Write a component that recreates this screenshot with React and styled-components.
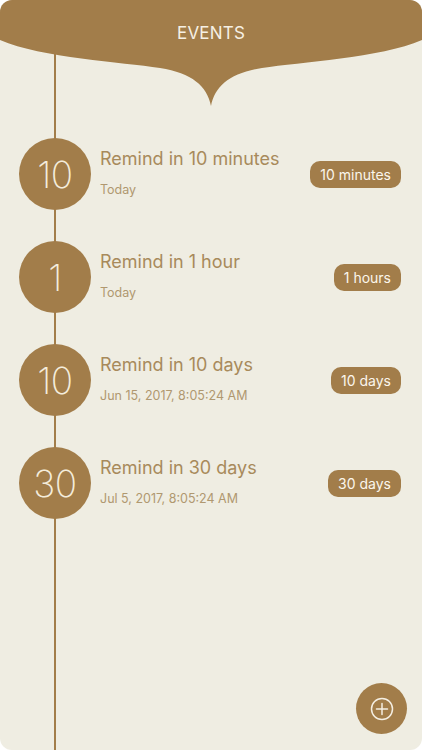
import React from 'react';
import styled, { createGlobalStyle } from 'styled-components';

const BROWN = '#a27d4a';
const CREAM = '#efede2';

const events = [
  { id: 1, count: 10, title: 'Remind in 10 minutes', date: 'Today', badge: '10 minutes' },
  { id: 2, count: 1, title: 'Remind in 1 hour', date: 'Today', badge: '1 hours' },
  { id: 3, count: 10, title: 'Remind in 10 days', date: 'Jun 15, 2017, 8:05:24 AM', badge: '10 days' },
  { id: 4, count: 30, title: 'Remind in 30 days', date: 'Jul 5, 2017, 8:05:24 AM', badge: '30 days' },
];

const GlobalStyle = createGlobalStyle`
  * {
    box-sizing: border-box;
  }

  html, body {
    margin: 0;
    padding: 0;
    background: #ffffff;
  }

  body {
    font-family: Inter, 'Open Sans', 'Liberation Sans', sans-serif;
  }
`;

function HeaderShape() {
  return (
    <svg width="422" height="106" viewBox="0 0 422 106">
      <path
        d="M0 0 H422 V40 C380 58 300 62 262 68 C230 73 215 86 211 106 C207 86 192 73 160 68 C122 62 42 58 0 40 Z"
        fill={BROWN}
      />
    </svg>
  );
}

function PlusCircle() {
  return (
    <svg width="24" height="24" viewBox="0 0 24 24" fill="none" stroke="#f4eee2" strokeWidth="1.5" strokeLinecap="round">
      <circle cx="12" cy="12" r="10.5" />
      <path d="M12 6.5v11M6.5 12h11" />
    </svg>
  );
}

function EventRow({ count, title, date, badge }) {
  return (
    <Row>
      <Bubble>{count}</Bubble>
      <Info>
        <Title>{title}</Title>
        <DateText>{date}</DateText>
      </Info>
      <Badge>{badge}</Badge>
    </Row>
  );
}

export default function App() {
  return (
    <Screen>
      <GlobalStyle />
      <Header>
        <HeaderShape />
        <HeaderTitle>EVENTS</HeaderTitle>
      </Header>
      <List>
        {events.map((event) => (
          <EventRow key={event.id} {...event} />
        ))}
      </List>
      <AddButton aria-label="Add event">
        <PlusCircle />
      </AddButton>
    </Screen>
  );
}

const Screen = styled.div`
  position: relative;
  width: 422px;
  height: 750px;
  overflow: hidden;
  border-radius: 12px;
  background: linear-gradient(${BROWN}, ${BROWN}) 54px 0 / 2px 100% no-repeat, ${CREAM};
`;

const Header = styled.header`
  position: relative;
  height: 106px;

  svg {
    display: block;
  }
`;

const HeaderTitle = styled.h1`
  position: absolute;
  top: 23px;
  left: 0;
  right: 0;
  margin: 0;
  text-align: center;
  font-size: 17px;
  font-weight: 400;
  letter-spacing: 0.2px;
  color: #f6f0e4;
`;

const List = styled.ul`
  list-style: none;
  margin: 0;
  padding: 32px 21px 0 19px;
  display: flex;
  flex-direction: column;
  gap: 31px;
`;

const Row = styled.li`
  display: flex;
  align-items: center;
  height: 72px;
`;

const Bubble = styled.div`
  flex: 0 0 72px;
  height: 72px;
  border-radius: 50%;
  background: ${BROWN};
  color: #f4ecdb;
  display: flex;
  align-items: center;
  justify-content: center;
  font-size: 37px;
  font-weight: 200;
  letter-spacing: -0.5px;
`;

const Info = styled.div`
  flex: 1;
  display: flex;
  flex-direction: column;
  gap: 11.5px;
  padding-left: 9px;
  margin-top: -3px;
`;

const Title = styled.span`
  font-size: 18px;
  line-height: 22px;
  color: #a88a5b;
`;

const DateText = styled.span`
  font-size: 12.5px;
  line-height: 15px;
  color: #b09870;
`;

const Badge = styled.span`
  height: 27px;
  padding: 0 10px;
  border-radius: 10px;
  background: ${BROWN};
  color: #fbf6ec;
  font-size: 14px;
  display: flex;
  align-items: center;
`;

const AddButton = styled.button`
  position: absolute;
  right: 15px;
  bottom: 16px;
  width: 51px;
  height: 51px;
  border: none;
  border-radius: 50%;
  background: ${BROWN};
  display: flex;
  align-items: center;
  justify-content: center;
  padding: 0;
  cursor: pointer;
`;
